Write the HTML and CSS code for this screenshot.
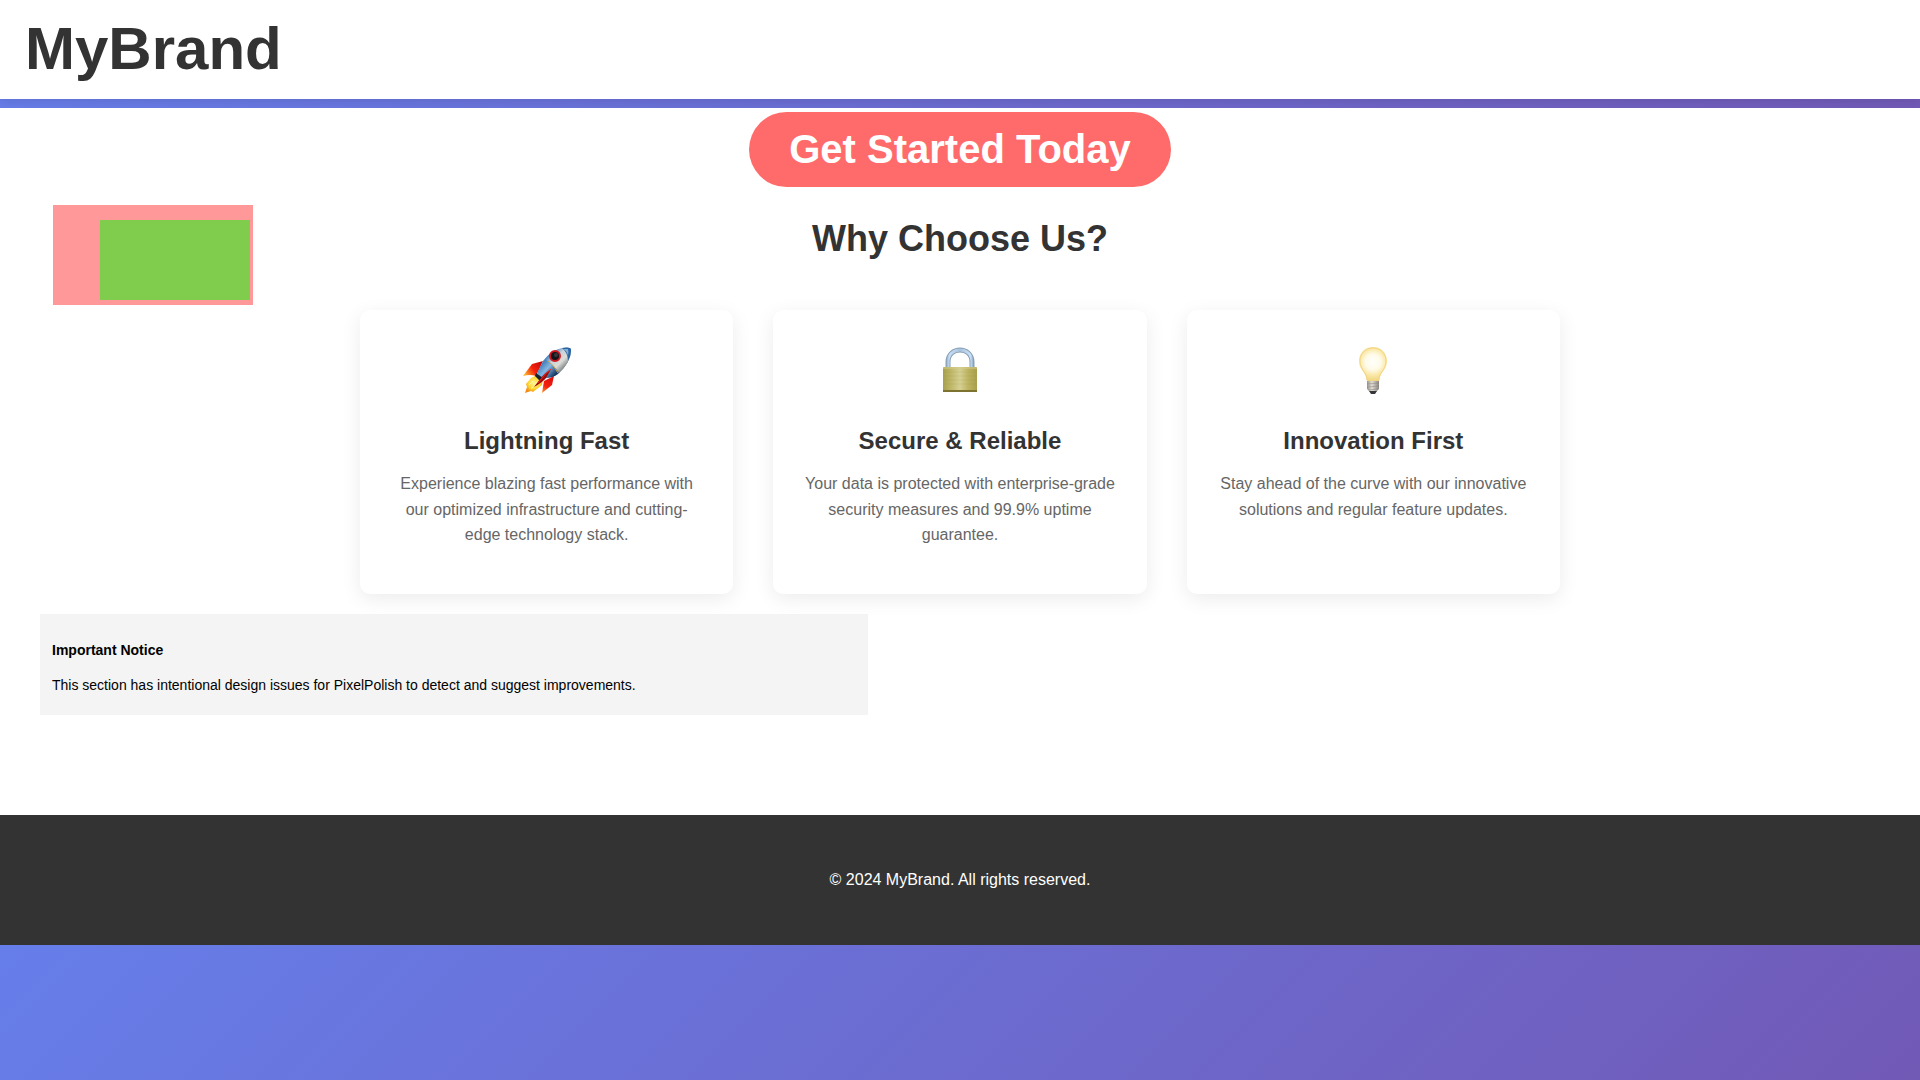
FILE: index.html
```html
<!DOCTYPE html>
<html lang="en">
<head>
<meta charset="utf-8">
<meta name="viewport" content="width=device-width, initial-scale=1">
<title>MyBrand</title>
<link rel="stylesheet" href="styles.css">
</head>
<body>
<header class="site-header">
  <div class="logo">MyBrand</div>
</header>

<main class="content">
  <div class="cta">
    <button type="button" class="cta-button">Get Started Today</button>
  </div>

  <section class="features">
    <div class="features-head">
      <div class="swatch"><div class="swatch-inner"></div></div>
      <h2 class="features-title">Why Choose Us?</h2>
    </div>
    <div class="feature-grid">
      <article class="feature-card">
        <svg class="feature-icon" viewBox="0 0 48 48" aria-hidden="true">
          <defs>
            <linearGradient id="hull" gradientUnits="userSpaceOnUse" x1="24" y1="11" x2="39" y2="26">
              <stop offset="0" stop-color="#5b8fc4"/><stop offset=".3" stop-color="#c9d3d8"/><stop offset=".6" stop-color="#dcdcd6"/><stop offset="1" stop-color="#666c70"/>
            </linearGradient>
            <linearGradient id="tail" gradientUnits="userSpaceOnUse" x1="16" y1="21" x2="28" y2="32">
              <stop offset="0" stop-color="#4b85bd"/><stop offset=".4" stop-color="#86b6e2"/><stop offset="1" stop-color="#173a66"/>
            </linearGradient>
            <linearGradient id="fin" gradientUnits="userSpaceOnUse" x1="18" y1="16" x2="2" y2="28">
              <stop offset="0" stop-color="#c80b0b"/><stop offset=".5" stop-color="#f5210c"/><stop offset="1" stop-color="#ffb52a"/>
            </linearGradient>
            <linearGradient id="fin2" gradientUnits="userSpaceOnUse" x1="30" y1="30" x2="19" y2="46">
              <stop offset="0" stop-color="#d90d0d"/><stop offset=".6" stop-color="#f5210c"/><stop offset="1" stop-color="#ffa02a"/>
            </linearGradient>
            <radialGradient id="flame" gradientUnits="userSpaceOnUse" cx="11" cy="36" r="10">
              <stop offset="0" stop-color="#fff79a"/><stop offset=".6" stop-color="#ffd52e"/><stop offset="1" stop-color="#f28a12"/>
            </radialGradient>
          </defs>
          <path d="M20 14 L9 17 L0 29 Q7 27 13 29 Z" fill="url(#fin)"/>
          <path d="M31 29 L21 34 L19 46 L29 38 Z" fill="url(#fin2)"/>
          <path d="M14 28 L8 31 L3 37 L4 40 L2 46 L8 44 L10 45 L19 38 L20 31 Z" fill="url(#flame)"/>
          <path d="M6 38 L10 34 M8 42 L14 35" stroke="#fff6a8" stroke-width="1"/>
          <path d="M14 26 L20 14 Q27 4 40 1 Q49 -1 48 4 Q47 16 35 27 Q30 31 23 31 L19 33 Z" fill="url(#tail)"/>
          <path d="M22 12 Q29 3 39 1 Q49 -1 48 4 Q47 16 36 26 Q31 18 22 12 Z" fill="url(#hull)"/>
          <path d="M39 1 Q49 -1 48 4 Q48 9 45 14 Q45 6 39 1 Z" fill="#2863a3"/>
          <path d="M40 2 Q44 4 45 9 Q46 5 45 2 Z" fill="#83add5"/>
          <path d="M25 14 Q31 18 35 26" fill="none" stroke="#c5a850" stroke-width="1"/>
          <circle cx="32" cy="9" r="5" fill="#111418" stroke="#d01822" stroke-width="2"/>
          <circle cx="33" cy="8" r="2" fill="#34383e"/>
          <path d="M13 26 L20 31 L17 34 L12 29 Z" fill="#152333"/>
          <path d="M28 22 Q21 27 18 31 L11 40 Q20 35 23 31 Z" fill="#9f0909"/>
          <path d="M28 22 Q22 27 19 31 L15 36" fill="none" stroke="#ef2516" stroke-width="1"/>
        </svg>
        <h3 class="feature-name">Lightning Fast</h3>
        <p class="feature-text">Experience blazing fast performance with our optimized infrastructure and cutting-edge technology stack.</p>
      </article>
      <article class="feature-card">
        <svg class="feature-icon" viewBox="0 0 48 48" aria-hidden="true">
          <defs>
            <linearGradient id="brass" x1="0" x2="1" y1="0" y2="0">
              <stop offset="0" stop-color="#a8a052"/><stop offset=".15" stop-color="#b8af5c"/><stop offset=".5" stop-color="#d6d092"/><stop offset=".75" stop-color="#bcb260"/><stop offset="1" stop-color="#a89e4c"/>
            </linearGradient>
            <linearGradient id="steel" gradientUnits="userSpaceOnUse" x1="10" y1="0" x2="38" y2="0">
              <stop offset="0" stop-color="#8fa8c0"/><stop offset=".12" stop-color="#c6dff7"/><stop offset=".5" stop-color="#a9c1d9"/><stop offset=".88" stop-color="#c9e1f8"/><stop offset="1" stop-color="#839bb3"/>
            </linearGradient>
          </defs>
          <path d="M12 22 V15 C12 -1 36 -1 36 15 V22" fill="none" stroke="#879fb5" stroke-width="5"/>
          <path d="M12 22 V15 C12 -1 36 -1 36 15 V22" fill="none" stroke="url(#steel)" stroke-width="3"/>
          <rect x="7" y="20" width="34" height="25" rx="1" fill="url(#brass)"/>
          <path d="M8 25 H40 M8 29 H40 M8 33 H40 M8 37 H40" stroke="#8f8535" stroke-opacity=".12"/>
          <path d="M7 21 H41" stroke="#d3cc8c" stroke-width="1"/>
          <path d="M7 44 H41" stroke="#7d7230" stroke-width="2"/>
        </svg>
        <h3 class="feature-name">Secure &amp; Reliable</h3>
        <p class="feature-text">Your data is protected with enterprise-grade security measures and 99.9% uptime guarantee.</p>
      </article>
      <article class="feature-card">
        <svg class="feature-icon" viewBox="0 0 48 48" aria-hidden="true">
          <defs>
            <radialGradient id="glow" gradientUnits="userSpaceOnUse" cx="24" cy="15" r="19">
              <stop offset="0" stop-color="#fffffb"/><stop offset=".4" stop-color="#fffbea"/><stop offset=".7" stop-color="#fae8a6"/><stop offset="1" stop-color="#f1d480"/>
            </radialGradient>
            <linearGradient id="cap" x1="0" x2="1" y1="0" y2="0">
              <stop offset="0" stop-color="#9b968d"/><stop offset=".4" stop-color="#dedbd4"/><stop offset="1" stop-color="#8c877f"/>
            </linearGradient>
          </defs>
          <path d="M24 0 C16 0 10 6 10 14 C10 23 17 25 18 34 H30 C31 25 38 23 38 14 C38 6 32 0 24 0 Z" fill="url(#glow)"/>
          <path d="M24 1 C16 1 11 7 11 14 C11 23 18 25 18 33 M24 1 C32 1 37 7 37 14 C37 23 30 25 30 33" fill="none" stroke="#f3d685" stroke-width="1"/>
          <path d="M18 34 H30 V42 L27 45 H21 L18 42 Z" fill="url(#cap)"/>
          <path d="M18 37 L30 36 M18 40 L30 39 M19 43 L29 42" stroke="#77736c" stroke-opacity=".4"/>
          <path d="M20 44 H28 L26 47 H22 Z" fill="#35373a"/>
        </svg>
        <h3 class="feature-name">Innovation First</h3>
        <p class="feature-text">Stay ahead of the curve with our innovative solutions and regular feature updates.</p>
      </article>
    </div>
  </section>

  <aside class="notice">
    <h4 class="notice-title">Important Notice</h4>
    <p class="notice-text">This section has intentional design issues for PixelPolish to detect and suggest improvements.</p>
  </aside>
</main>

<footer class="site-footer">
  <p class="copyright">© 2024 MyBrand. All rights reserved.</p>
</footer>
</body>
</html>
```
FILE: styles.css
```css
* {
  box-sizing: border-box;
  margin: 0;
  padding: 0;
}

body {
  font-family: "Liberation Sans", Arial, sans-serif;
  font-size: 16px;
  background: linear-gradient(135deg, #667eea 0%, #764ba2 100%);
}

.site-header {
  padding: 15px 25px;
  background: #fff;
  box-shadow: 0 2px 10px rgba(0, 0, 0, 0.1);
}

.logo {
  font-size: 60px;
  line-height: 68px;
  padding-bottom: 1px;
  font-weight: bold;
  color: #333;
}

.content {
  position: relative;
  margin-top: 9px;
  padding: 4px 40px 100px;
  background: #fff;
}

.cta {
  display: flex;
  justify-content: center;
}

.cta-button {
  padding: 15px 40px;
  border: 0;
  border-radius: 50px;
  background: #ff6b6b;
  color: #fff;
  font-family: inherit;
  font-size: 40px;
  line-height: 45px;
  font-weight: bold;
  cursor: pointer;
}

.features {
  padding-top: 18px;
}

.features-head {
  display: grid;
  grid-template-columns: 1fr auto 1fr;
  align-items: start;
  margin-bottom: 5px;
}

.swatch {
  width: 200px;
  height: 100px;
  margin-left: 13px;
  padding: 15px 3px 5px 47px;
  background: #ff9999;
}

.swatch-inner {
  height: 100%;
  background: #80cc4d;
}

.features-title {
  padding-top: 13px;
  font-size: 36px;
  line-height: 41px;
  color: #333;
}

.feature-grid {
  display: grid;
  grid-template-columns: repeat(3, 1fr);
  gap: 40px;
  max-width: 1200px;
  margin: 0 auto;
}

.feature-card {
  padding: 37px 30px 46px;
  border-radius: 10px;
  background: #fff;
  box-shadow: 0 5px 20px rgba(0, 0, 0, 0.08);
  text-align: center;
}

.feature-icon {
  display: block;
  width: 48px;
  height: 48px;
  margin: 0 auto 32px;
}

.feature-name {
  margin-bottom: 16px;
  font-size: 24px;
  line-height: 28px;
  color: #333;
}

.feature-text {
  line-height: 1.6;
  color: #666;
}

.notice {
  width: 45%;
  margin-top: 20px;
  padding: 28px 12px 22px;
  background: #f4f4f4;
  color: #000;
  font-size: 14px;
  line-height: 16px;
}

.notice-title {
  margin-bottom: 19px;
  font-size: 14px;
}

.site-footer {
  padding: 56px 40px;
  background: #333;
  color: #fff;
  text-align: center;
}

.copyright {
  line-height: 18px;
}
```
